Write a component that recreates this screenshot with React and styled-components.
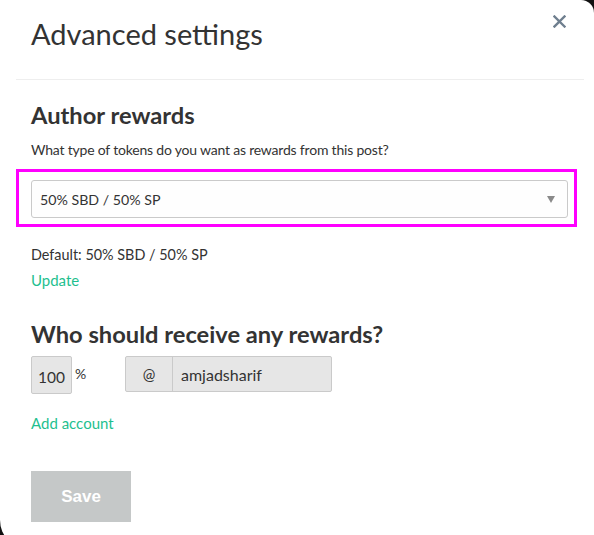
import styled, { createGlobalStyle } from "styled-components";

const GlobalStyle = createGlobalStyle`
  html, body {
    margin: 0;
    padding: 0;
    background: #111;
    overflow: hidden;
  }
  body {
    font-family: "Lato", "Liberation Sans", sans-serif;
    color: #333;
  }
`;

const Modal = styled.div`
  width: 594px;
  height: 550px;
  background: #fff;
  border-top-right-radius: 13px;
  border-bottom-left-radius: 30px;
  box-sizing: border-box;
`;

const Header = styled.div`
  display: flex;
  justify-content: space-between;
  align-items: flex-start;
  margin: 0 10px 0 16px;
  padding: 16px 18px 27px 15px;
  border-bottom: 1px solid #eee;
`;

const Title = styled.h2`
  margin: 0;
  font-size: 29px;
  font-weight: 400;
  line-height: 36px;
  color: #333;
`;

const Close = styled.button`
  margin-top: -1px;
  padding: 0;
  border: 0;
  background: none;
  width: 13px;
  height: 13px;
  cursor: pointer;
  display: flex;
`;

const Body = styled.div`
  padding: 21px 26px 0 31px;
`;

const Heading = styled.h3`
  margin: ${(p) => p.$top || 0}px 0 0;
  font-size: 23.7px;
  font-weight: 700;
  line-height: 28px;
  color: #333;
`;

const Text = styled.div`
  font-size: ${(p) => p.$size || 14}px;
  line-height: 20px;
  letter-spacing: ${(p) => p.$spacing || 0}px;
  margin-top: ${(p) => p.$top || 0}px;
`;

const GreenLink = styled.a`
  display: block;
  font-size: 15px;
  line-height: 20px;
  color: #1fbf8f;
  text-decoration: none;
  margin-top: ${(p) => p.$top || 0}px;
`;

const Highlight = styled.div`
  margin: 9px -9px 0 -15px;
  border: 3px solid #ff00ff;
  padding: 8px 6px 6px 12px;
`;

const Select = styled.div`
  height: 38px;
  box-sizing: border-box;
  border: 1px solid #cacaca;
  border-radius: 3px;
  background: #fefefe;
  display: flex;
  align-items: center;
  justify-content: space-between;
  padding: 0 12px 0 8px;
  font-size: 14.2px;
  color: #333;
`;

const Arrow = styled.span`
  width: 0;
  height: 0;
  border-left: 4px solid transparent;
  border-right: 4px solid transparent;
  border-top: 7px solid #8a8a8a;
`;

const Row = styled.div`
  display: flex;
  align-items: flex-start;
  margin-top: 8px;
`;

const Percent = styled.div`
  width: 41px;
  height: 38px;
  box-sizing: border-box;
  border: 1px solid #cacaca;
  border-radius: 2px;
  background: #e6e6e6;
  display: flex;
  align-items: flex-end;
  justify-content: center;
  padding-bottom: 7px;
  font-size: 15.5px;
`;

const Sign = styled.span`
  font-size: 14px;
  margin: 9px 0 0 3px;
  width: 50px;
`;

const Group = styled.div`
  display: flex;
  width: 207px;
  height: 36px;
  box-sizing: border-box;
  border: 1px solid #cacaca;
  border-radius: 2px;
  background: #e6e6e6;
  font-size: 16px;
`;

const Addon = styled.span`
  width: 46px;
  border-right: 1px solid #cacaca;
  display: flex;
  align-items: center;
  justify-content: center;
  font-size: 15px;
`;

const Account = styled.span`
  display: flex;
  align-items: center;
  padding-left: 8px;
`;

const SaveButton = styled.button`
  margin-top: 38px;
  width: 100px;
  height: 51px;
  border: 0;
  background: #c5c8c8;
  color: #fff;
  font-family: "Liberation Sans", Arial, sans-serif;
  font-weight: 700;
  font-size: 17px;
`;

export default function App() {
  return (
    <>
      <GlobalStyle />
      <Modal>
        <Header>
          <Title>Advanced settings</Title>
          <Close aria-label="close">
            <svg width="13" height="13" viewBox="0 0 13 13">
              <path d="M1.5 1.5 L11.5 11.5 M11.5 1.5 L1.5 11.5" stroke="#6f7f8f" strokeWidth="2.4" strokeLinecap="square" />
            </svg>
          </Close>
        </Header>
        <Body>
          <Heading>Author rewards</Heading>
          <Text $top={11} $spacing={-0.2}>What type of tokens do you want as rewards from this post?</Text>
          <Highlight>
            <Select>
              <span>50% SBD / 50% SP</span>
              <Arrow />
            </Select>
          </Highlight>
          <Text $top={18} $size={14.4}>Default: 50% SBD / 50% SP</Text>
          <GreenLink href="#" $top={5}>Update</GreenLink>
          <Heading $top={30}>Who should receive any rewards?</Heading>
          <Row>
            <Percent>100</Percent>
            <Sign>%</Sign>
            <Group>
              <Addon>@</Addon>
              <Account>amjadsharif</Account>
            </Group>
          </Row>
          <GreenLink href="#" $top={19}>Add account</GreenLink>
          <SaveButton>Save</SaveButton>
        </Body>
      </Modal>
    </>
  );
}
